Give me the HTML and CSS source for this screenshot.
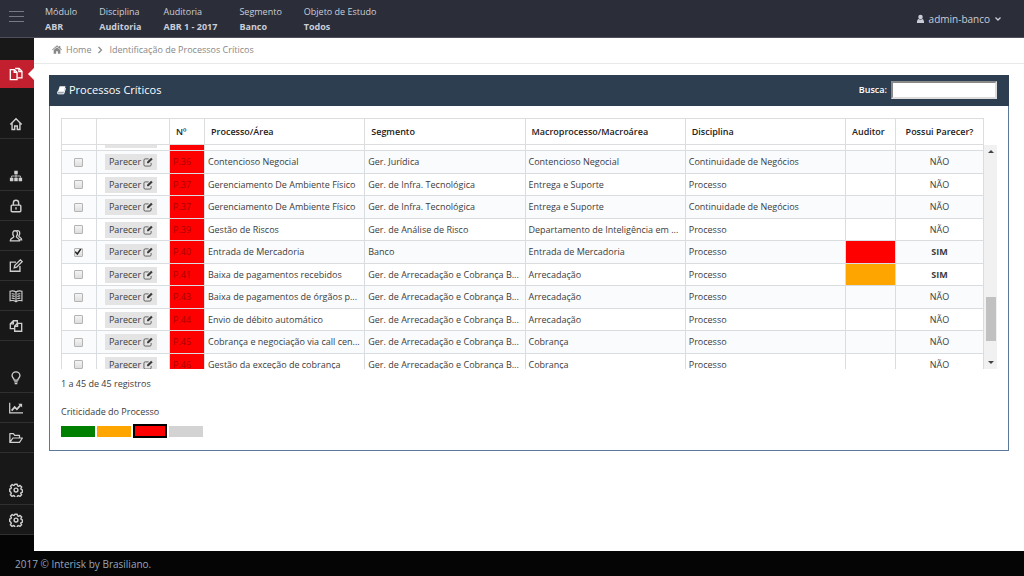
FILE: index.html
```html
<!DOCTYPE html>
<html lang="pt-BR">
<head>
<meta charset="utf-8">
<meta name="viewport" content="width=device-width, initial-scale=1">
<title>Processos Críticos</title>
<link rel="stylesheet" href="styles.css">
</head>
<body>
<svg class="sprite" aria-hidden="true">
  <symbol id="pen" viewBox="0 0 16 16"><path d="M13 9.500v3a2 2 0 0 1-2 2H3.500a2 2 0 0 1-2-2V5a2 2 0 0 1 2-2H9" fill="none" stroke="currentColor" stroke-width="1.200"/><path d="M13 1l2.500 2.500-6.500 6.500H6.500V7.500z" fill="currentColor"/></symbol>
  <symbol id="gear" viewBox="0 0 16 16"><g fill="none" stroke="currentColor" stroke-width="1.600" stroke-linejoin="round"><path d="M6.600 1.500h2.800l.4 1.800 1.200.5 1.600-1 1.900 1.900-1 1.600.5 1.200 1.500.3v2.600l-1.600.4-.5 1.100 1 1.500-1.900 1.900-1.600-1-1.100.5-.4 1.600H6.600l-.4-1.600-1.200-.5-1.500 1-1.900-1.900 1-1.600-.5-1.100L.8 9.400V6.700l1.400-.3.5-1.100-1-1.600 1.900-1.900 1.500 1 1.100-.4z"/><circle cx="8" cy="8" r="2.200"/></g></symbol>
</svg>

<header class="topbar">
  <button class="menu-toggle" type="button" aria-label="Menu"><span></span><span></span><span></span></button>
  <dl class="context">
    <div><dt>Módulo</dt><dd>ABR</dd></div>
    <div><dt>Disciplina</dt><dd>Auditoria</dd></div>
    <div><dt>Auditoria</dt><dd>ABR 1 - 2017</dd></div>
    <div><dt>Segmento</dt><dd>Banco</dd></div>
    <div><dt>Objeto de Estudo</dt><dd>Todos</dd></div>
  </dl>
  <button class="user" type="button">
    <svg class="user-icon" viewBox="0 0 10 10" aria-hidden="true"><circle cx="5" cy="2.800" r="2.500" fill="currentColor"/><path d="M1 9.500C1 6.500 2 5.200 3 5q2 1.500 4 0c1 .2 2 1.500 2 4.500z" fill="currentColor"/></svg>
    <span>admin-banco</span>
    <svg class="caret" viewBox="0 0 8 8" aria-hidden="true"><path d="M1.500 2.500L4 5l2.500-2.500" fill="none" stroke="currentColor" stroke-width="1.300"/></svg>
  </button>
</header>

<div class="shell">
  <nav class="sidebar" aria-label="Principal">
    <div class="group">
      <a class="item active" href="#" aria-label="Processos"><svg viewBox="0 0 16 16"><g fill="none" stroke="currentColor" stroke-width="1.500"><path d="M9.200 14.500H1.500V3h4.700l3 3zM6 3v3.200h3.200"/><path d="M7 1.700h4.500L14.800 5v7.500H9.500M11.300 2v3.200h3.500"/></g></svg></a>
    </div>
    <div class="group">
      <a class="item" href="#" aria-label="Início"><svg viewBox="0 0 16 16"><path d="M1.500 8.500L8 2l6.500 6.500M3.500 7v7.200h3v-4h3v4h3V7" fill="none" stroke="currentColor" stroke-width="1.600"/></svg></a>
    </div>
    <div class="group">
      <a class="item" href="#" aria-label="Estrutura"><svg viewBox="0 0 16 16"><path d="M6 2h4v4H6zM1 10h4v4H1zM6 10h4v4H6zM11 10h4v4h-4z" fill="currentColor"/><path d="M3 10V8h10v2M8 6v4" fill="none" stroke="currentColor"/></svg></a>
      <a class="item" href="#" aria-label="Acesso"><svg viewBox="0 0 16 16"><g fill="none" stroke="currentColor" stroke-width="1.600"><rect x="2.500" y="7" width="11" height="7.500" rx="1"/><path d="M5 7V4.500a3 3 0 0 1 6 0V7M8 9.500v2.500"/></g></svg></a>
      <a class="item" href="#" aria-label="Usuários"><svg viewBox="0 0 16 16"><g fill="none" stroke="currentColor" stroke-width="1.500"><path d="M5.500 8.500C3.500 5.500 4 2 7 2s3.500 3.500 1.500 6.500c0 2 3.500 1.500 3.500 5H1.500c0-3.500 4-3 4-5z"/><path d="M8.500 2.200C12 .8 13.500 4.500 11.200 8c0 1.500 3.300 1.500 3.300 4.500H12"/></g></svg></a>
      <a class="item" href="#" aria-label="Avaliação"><svg viewBox="0 0 16 16"><g fill="none" stroke="currentColor" stroke-width="1.500"><path d="M12.500 8v6h-11V3.500H8"/><path d="M6 10l.6-2.800L13 1l2 2-6.300 6.300z"/></g></svg></a>
      <a class="item" href="#" aria-label="Biblioteca"><svg viewBox="0 0 16 16"><g fill="none" stroke="currentColor" stroke-width="1.300"><path d="M8 3.500C6 2 3.500 2 1.200 2.500v11c2-.5 4.800-.5 6.800 1 2-1.500 4.800-1.500 6.800-1v-11C12.500 2 10 2 8 3.500V14"/><path d="M3 5.500q1.800-.3 3.500.5M3 8q1.800-.3 3.500.5M3 10.500q1.800-.3 3.500.5M13 5.500q-1.800-.3-3.500.5M13 8q-1.800-.3-3.500.5M13 10.500q-1.800-.3-3.500.5"/></g></svg></a>
      <a class="item" href="#" aria-label="Cópias"><svg viewBox="0 0 16 16"><g fill="none" stroke="currentColor" stroke-width="1.500"><path d="M6.500 11H1.500V5.500l3.500-3.500h4.500v3M5 2v3.500H1.500"/><path d="M6.500 14V8L9.500 5h5v9zM9.800 5v3.300H6.500"/></g></svg></a>
    </div>
    <div class="group">
      <a class="item" href="#" aria-label="Ideias"><svg viewBox="0 0 16 16"><g fill="none" stroke="currentColor" stroke-width="1.500"><path d="M6 10.500c0-2-2.500-2.500-2.500-5.300a4.500 4.300 0 0 1 9 0c0 2.800-2.500 3.300-2.500 5.300z"/><path d="M6 12.500h4M6.500 14.500h3"/></g></svg></a>
      <a class="item" href="#" aria-label="Gráficos"><svg viewBox="0 0 16 16"><path d="M.8 2v11.500H16" fill="none" stroke="currentColor" stroke-width="1.400"/><path d="M3 11l3.500-4 2.500 2.500 4-4.500" fill="none" stroke="currentColor" stroke-width="2"/><path d="M10.500 3H15v4.500z" fill="currentColor"/></svg></a>
      <a class="item" href="#" aria-label="Arquivos"><svg viewBox="0 0 16 16"><path d="M1 13V3h4l1.500 2h5.500V8M1 13L4.500 8H15.300l-3.300 5z" fill="none" stroke="currentColor" stroke-width="1.400" stroke-linejoin="round"/></svg></a>
    </div>
    <div class="group">
      <a class="item" href="#" aria-label="Configurações"><svg><use href="#gear"/></svg></a>
      <a class="item" href="#" aria-label="Administração"><svg><use href="#gear"/></svg></a>
    </div>
  </nav>

  <main class="content">
    <nav class="breadcrumb" aria-label="Trilha">
      <svg class="home-icon" viewBox="0 0 12 10" aria-hidden="true"><path d="M6 0l2.500 2V.8H10v2.500l2 1.900-.7.700L6 1.500.7 5.900 0 5.200z" fill="currentColor"/><path d="M2 5.700l4-3.300 4 3.300V10H7V7H5v3H2z" fill="currentColor"/></svg>
      <a href="#">Home</a>
      <svg class="caret" viewBox="0 0 8 8" aria-hidden="true"><path d="M2.500 1L5.500 4l-3 3" fill="none" stroke="currentColor" stroke-width="1.200"/></svg>
      <a href="#">Identificação de Processos Críticos</a>
    </nav>

    <section class="panel">
      <div class="panel-head">
        <svg class="book-icon" viewBox="0 0 10 10" aria-hidden="true"><path d="M1 6.500C0 8.500.5 9.300 1.500 9.300H7.500L9.500 3" fill="#9aa5b1" stroke="currentColor"/><path d="M3 .8h6.500L7.500 7H1z" fill="currentColor"/></svg>
        <h1>Processos Críticos</h1>
        <label for="busca">Busca:</label>
        <input id="busca" type="text">
      </div>
      <div class="panel-body">
        <table class="grid grid-head">
          <colgroup><col class="c-check"><col class="c-action"><col class="c-num"><col><col><col><col><col class="c-auditor"><col class="c-parecer"></colgroup>
          <thead><tr><th></th><th></th><th>Nº</th><th>Processo/Área</th><th>Segmento</th><th>Macroprocesso/Macroárea</th><th>Disciplina</th><th>Auditor</th><th class="center">Possui Parecer?</th></tr></thead>
        </table>
        <div class="scroller">
          <div class="viewport">
            <table class="grid grid-body">
              <colgroup><col class="c-check"><col class="c-action"><col class="c-num"><col><col><col><col><col class="c-auditor"><col class="c-parecer"></colgroup>
              <tbody>
                <tr><td><input type="checkbox" aria-label="P.36"></td><td><button class="opinion" type="button">Parecer<svg><use href="#pen"/></svg></button></td><td class="num">P.36</td><td>Contencioso Negocial</td><td>Ger. Jurídica</td><td>Contencioso Negocial</td><td>Processo</td><td></td><td class="center">NÃO</td></tr>
                <tr><td><input type="checkbox" aria-label="P.36"></td><td><button class="opinion" type="button">Parecer<svg><use href="#pen"/></svg></button></td><td class="num">P.36</td><td>Contencioso Negocial</td><td>Ger. Jurídica</td><td>Contencioso Negocial</td><td>Continuidade de Negócios</td><td></td><td class="center">NÃO</td></tr>
                <tr><td><input type="checkbox" aria-label="P.37"></td><td><button class="opinion" type="button">Parecer<svg><use href="#pen"/></svg></button></td><td class="num">P.37</td><td>Gerenciamento De Ambiente Físico</td><td>Ger. de Infra. Tecnológica</td><td>Entrega e Suporte</td><td>Processo</td><td></td><td class="center">NÃO</td></tr>
                <tr><td><input type="checkbox" aria-label="P.37"></td><td><button class="opinion" type="button">Parecer<svg><use href="#pen"/></svg></button></td><td class="num">P.37</td><td>Gerenciamento De Ambiente Físico</td><td>Ger. de Infra. Tecnológica</td><td>Entrega e Suporte</td><td>Continuidade de Negócios</td><td></td><td class="center">NÃO</td></tr>
                <tr><td><input type="checkbox" aria-label="P.39"></td><td><button class="opinion" type="button">Parecer<svg><use href="#pen"/></svg></button></td><td class="num">P.39</td><td>Gestão de Riscos</td><td>Ger. de Análise de Risco</td><td>Departamento de Inteligência em ...</td><td>Processo</td><td></td><td class="center">NÃO</td></tr>
                <tr><td><input type="checkbox" aria-label="P.40" checked></td><td><button class="opinion" type="button">Parecer<svg><use href="#pen"/></svg></button></td><td class="num">P.40</td><td>Entrada de Mercadoria</td><td>Banco</td><td>Entrada de Mercadoria</td><td>Processo</td><td class="high"></td><td class="center yes">SIM</td></tr>
                <tr><td><input type="checkbox" aria-label="P.41"></td><td><button class="opinion" type="button">Parecer<svg><use href="#pen"/></svg></button></td><td class="num">P.41</td><td>Baixa de pagamentos recebidos</td><td>Ger. de Arrecadação e Cobrança B...</td><td>Arrecadação</td><td>Processo</td><td class="medium"></td><td class="center yes">SIM</td></tr>
                <tr><td><input type="checkbox" aria-label="P.43"></td><td><button class="opinion" type="button">Parecer<svg><use href="#pen"/></svg></button></td><td class="num">P.43</td><td>Baixa de pagamentos de órgãos p...</td><td>Ger. de Arrecadação e Cobrança B...</td><td>Arrecadação</td><td>Processo</td><td></td><td class="center">NÃO</td></tr>
                <tr><td><input type="checkbox" aria-label="P.44"></td><td><button class="opinion" type="button">Parecer<svg><use href="#pen"/></svg></button></td><td class="num">P.44</td><td>Envio de débito automático</td><td>Ger. de Arrecadação e Cobrança B...</td><td>Arrecadação</td><td>Processo</td><td></td><td class="center">NÃO</td></tr>
                <tr><td><input type="checkbox" aria-label="P.45"></td><td><button class="opinion" type="button">Parecer<svg><use href="#pen"/></svg></button></td><td class="num">P.45</td><td>Cobrança e negociação via call cen...</td><td>Ger. de Arrecadação e Cobrança B...</td><td>Cobrança</td><td>Processo</td><td></td><td class="center">NÃO</td></tr>
                <tr><td><input type="checkbox" aria-label="P.46"></td><td><button class="opinion" type="button">Parecer<svg><use href="#pen"/></svg></button></td><td class="num">P.46</td><td>Gestão da exceção de cobrança</td><td>Ger. de Arrecadação e Cobrança B...</td><td>Cobrança</td><td>Processo</td><td></td><td class="center">NÃO</td></tr>
              </tbody>
            </table>
          </div>
          <div class="scrollbar" aria-hidden="true">
            <span class="arrow up"></span>
            <span class="track"></span>
            <span class="thumb"></span>
            <span class="track-end"></span>
            <span class="arrow down"></span>
          </div>
        </div>
        <p class="count">1 a 45 de 45 registros</p>
        <p class="legend-title">Criticidade do Processo</p>
        <div class="legend">
          <button class="swatch low" type="button" aria-label="Baixa"></button>
          <button class="swatch medium" type="button" aria-label="Média"></button>
          <button class="swatch high selected" type="button" aria-label="Alta"></button>
          <button class="swatch none" type="button" aria-label="Sem criticidade"></button>
        </div>
      </div>
    </section>
  </main>
</div>

<footer class="footer">2017 © Interisk by Brasiliano.</footer>
</body>
</html>
```
FILE: styles.css
```css
* { box-sizing: border-box; }

body {
  display: flex;
  flex-direction: column;
  min-height: 100vh;
  margin: 0;
  background: #050505;
  color: #3c3c3c;
  font: 9px/14px "Open Sans", "Liberation Sans", sans-serif;
}

button {
  padding: 0;
  border: 0;
  background: none;
  color: inherit;
  font: inherit;
}

a { color: inherit; text-decoration: none; }

.sprite { position: absolute; width: 0; height: 0; }

.topbar {
  display: flex;
  align-items: center;
  min-height: 38px;
  padding: 0 22px 0 9px;
  border-bottom: 1px solid #4e5059;
  background: #2b2d38;
  color: #c9cdd8;
}

.menu-toggle {
  display: flex;
  flex-direction: column;
  gap: 4px;
  width: 15px;
  margin: 0 21px 4px 0;
}

.menu-toggle span { height: 1px; background: #777a85; }

.context { display: flex; gap: 22px; flex: 1; margin: 0; }
.context dt { line-height: 15px; }
.context dd { margin: 0; font-weight: 700; line-height: 15px; }

.user { display: flex; align-items: center; gap: 4px; font-size: 10px; }
.user-icon { width: 9px; height: 10px; }
.caret { width: 8px; height: 8px; }

.shell { display: flex; flex: 1; }

.sidebar {
  display: flex;
  flex-direction: column;
  gap: 22px;
  align-self: flex-start;
  width: 34px;
  padding-top: 22px;
  background: #181818;
  color: #d0d0d0;
}

.group:first-child { margin-bottom: -1px; }

.item {
  position: relative;
  display: flex;
  align-items: center;
  justify-content: center;
  height: 30px;
  padding-right: 2px;
  border-bottom: 1px solid #303030;
}

.item svg { width: 14px; height: 14px; }

.active {
  height: 28px;
  border-bottom: 0;
  background: #c2202f;
  color: #fff;
}

.active::after {
  content: "";
  position: absolute;
  right: 0;
  top: 8px;
  border: solid transparent;
  border-width: 6px 6px 6px 0;
  border-right-color: #fff;
}

.content { flex: 1; min-width: 0; background: #fff; }

.breadcrumb {
  display: flex;
  align-items: center;
  gap: 4px;
  height: 26px;
  padding: 0 18px 2px;
  border-bottom: 1px solid #e9e9e9;
  color: #888;
}

.breadcrumb .caret { margin: 0 1px; }
.home-icon { width: 10px; height: 9px; }

.panel {
  margin: 11px 15px 0;
  border: 1px solid #5b7a99;
  border-top: 0;
}

.panel-head {
  display: flex;
  align-items: center;
  height: 31px;
  margin: 0 -1px;
  padding: 0 12px 1px 8px;
  background: #2c3e50;
  color: #fff;
}

.book-icon { width: 9px; height: 10px; margin-right: 3px; }
.panel-head h1 { flex: 1; margin: 0; font-size: 11px; font-weight: 400; }
.panel-head label { margin-right: 4px; font-weight: 600; }

.panel-head input {
  width: 106px;
  height: 18px;
  padding: 0 4px;
  border: 2px inset #ddd;
  background: #fff;
  font: inherit;
}

.panel-body { padding: 12px 11px; }

.grid {
  width: 100%;
  border-collapse: collapse;
  table-layout: fixed;
}

.c-check { width: 35px; }
.c-action { width: 73px; }
.c-num { width: 35px; }
.c-auditor { width: 50px; }
.c-parecer { width: 88px; }

.grid-head { width: calc(100% - 13px); }

.grid th {
  height: 26px;
  padding: 0 6px;
  border: 1px solid #ddd;
  color: #222;
  font-weight: 600;
  text-align: left;
  white-space: nowrap;
}

.scroller { display: flex; height: 224px; overflow: hidden; }
.viewport { flex: 1; min-width: 0; }
.grid-body { margin-top: -17px; }
.grid tr { height: 23px; }
.grid-body tr:nth-child(odd) { height: 22px; }
.grid-body tr:nth-child(even) { background: #f9fbfd; }

.grid td {
  padding: 0 3px;
  border: 1px solid #d9dde0;
  overflow: hidden;
  white-space: nowrap;
}

.grid td:first-child { padding-right: 5px; }
.grid .center { text-align: center; }
.grid .yes { font-weight: 700; }
.grid .num { background: #f00; color: #a00; }

.grid input {
  display: grid;
  place-items: center;
  appearance: none;
  width: 9px;
  height: 9px;
  margin: 0 auto;
  border: 1px solid #b4b4b4;
  border-radius: 1px;
  background: linear-gradient(#f4f4f4, #dedede);
}

.grid input:checked::before {
  content: "";
  width: 7px;
  height: 7px;
  background: #222;
  clip-path: polygon(0 50%, 18% 38%, 38% 62%, 82% 0, 100% 12%, 42% 95%);
}

.opinion {
  display: flex;
  align-items: center;
  justify-content: center;
  gap: 2px;
  width: 52px;
  height: 16px;
  margin-left: 5px;
  background: #e4e4e4;
}

.opinion svg { width: 10px; height: 10px; }

.scrollbar {
  display: flex;
  flex-direction: column;
  align-items: center;
  width: 13px;
  background: #f1f1f1;
}

.arrow { border: solid transparent; border-width: 0 3px; }
.up { margin: 5px 0; border-bottom: 3px solid #444; }
.down { margin: 5px 0; border-top: 3px solid #444; }
.track { flex: 139; }
.thumb { flex: 44; width: 10px; background: #c1c1c1; }
.track-end { flex: 15; }

.count { margin: 8px 0 14px; }
.legend-title { margin: 0 0 5px; }
.legend { display: flex; align-items: center; gap: 2px; }
.swatch { width: 34px; height: 11px; }
.low { background: #008000; }
.medium { background: #ffa500; }
.high { background: #f00; }
.none { background: #d3d3d3; }
.selected { height: 14px; border: 2px solid #000; }

.footer {
  height: 25px;
  padding: 6px 15px;
  background: #050505;
  color: #98a6ba;
  font-size: 10px;
}
```
